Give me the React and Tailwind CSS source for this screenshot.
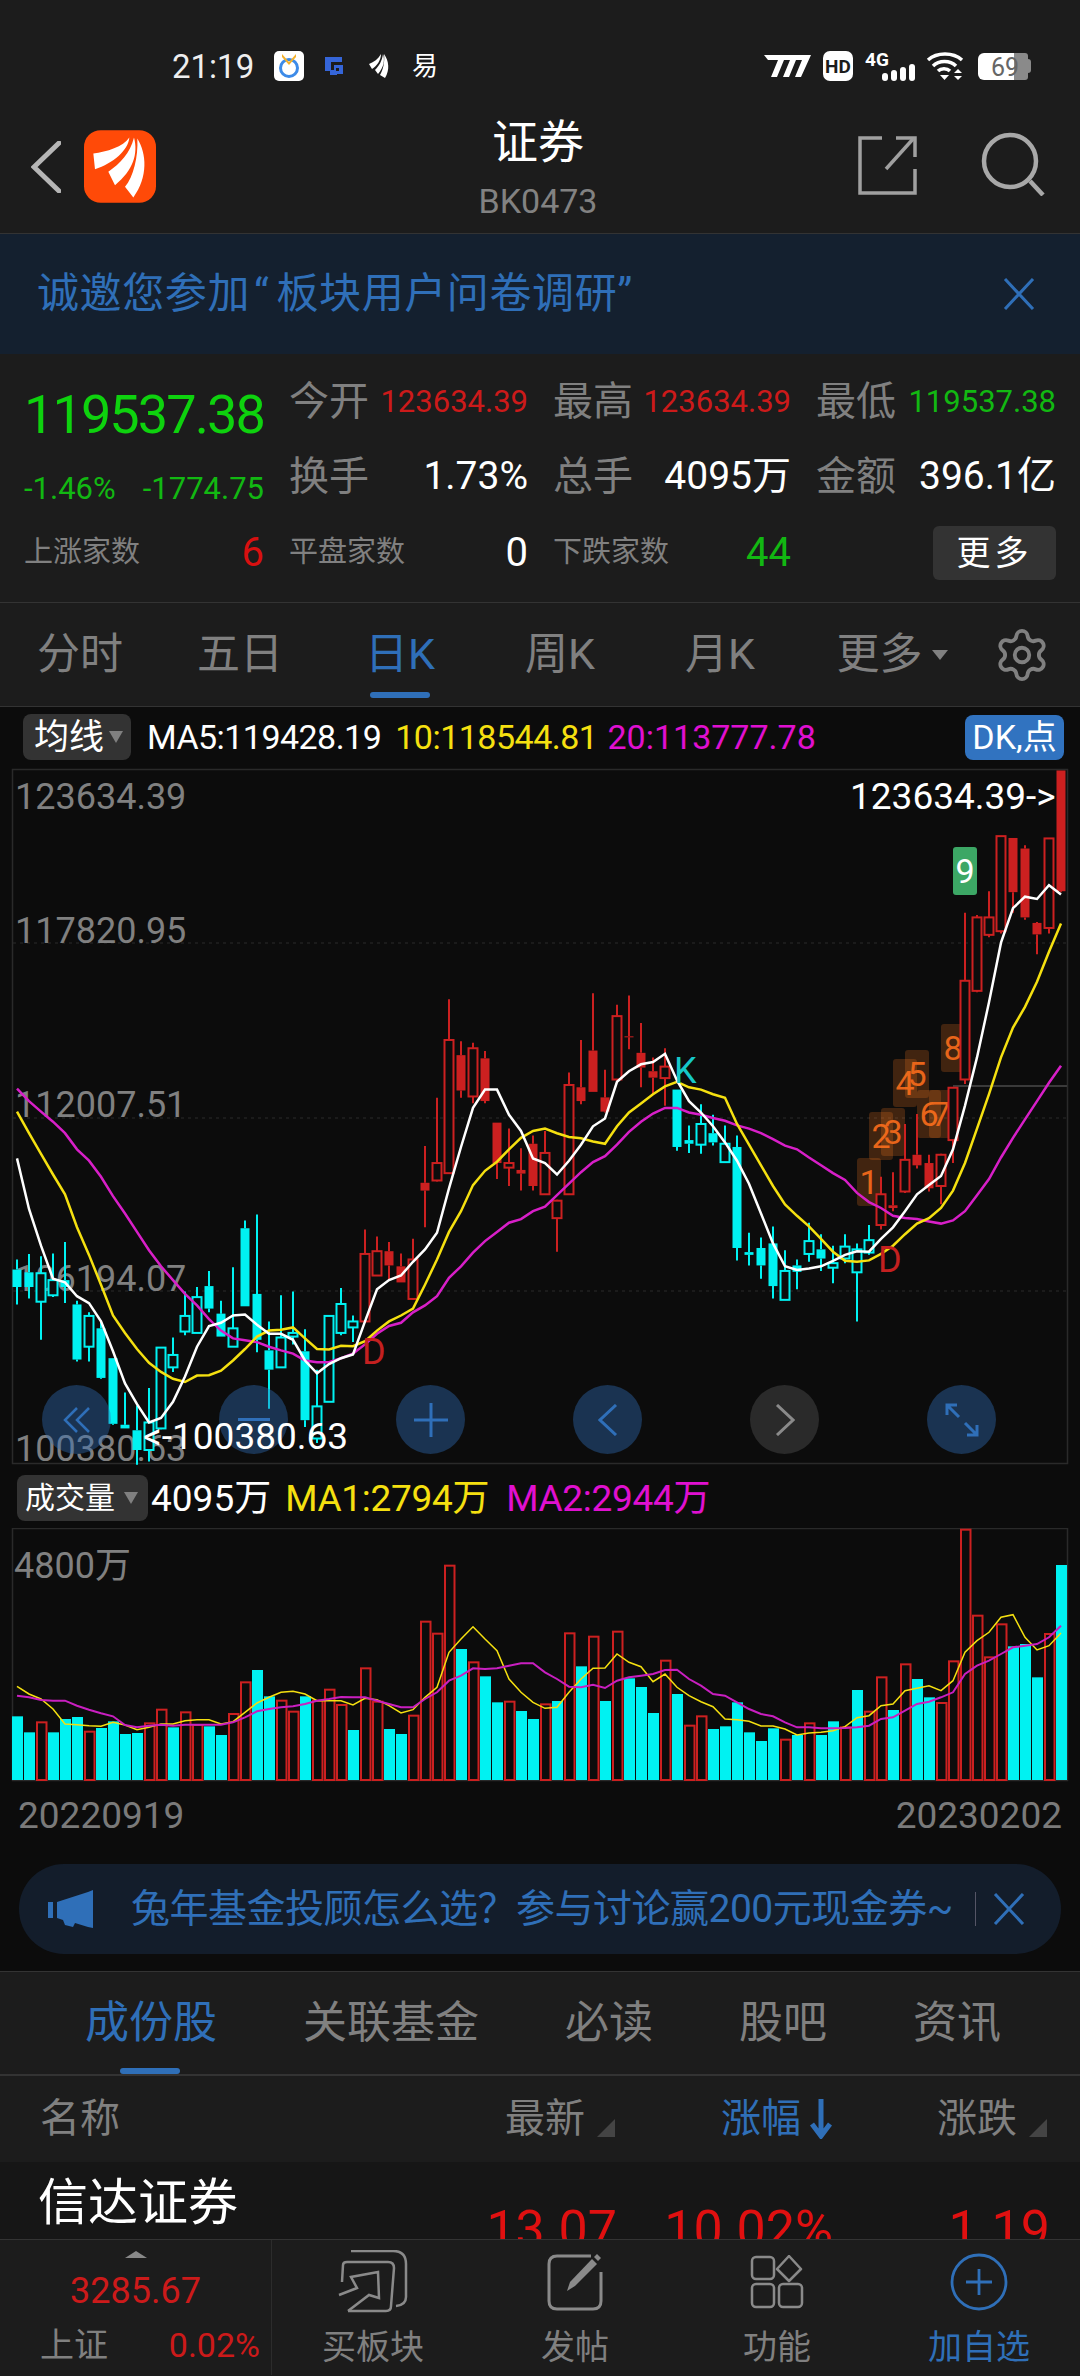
import React from "react";
import { Settings } from "lucide-react";

const BLUE = "#2f6fb8";
const RED = "#cc2020";
const CYAN = "#00f2f2";

// candles read off the chart: wick top, wick bottom, body top, body bottom, solid
const candles = [
  [1090,1188,1112,1150,1],[1078,1175,1118,1150,1],[1083,1265,1120,1182,0],[1077,1172,1135,1168,0],[1052,1185,1135,1150,1],
  [1180,1312,1188,1308,1],[1205,1312,1213,1280,0],[1225,1350,1240,1348,1],[1305,1450,1305,1448,1],[1380,1458,1450,1458,1],
  [1408,1537,1462,1505,1],[1370,1530,1445,1505,0],[1282,1460,1282,1458,0],[1260,1335,1298,1325,0],[1160,1255,1213,1247,0],
  [1150,1250,1172,1250,0],[1115,1205,1148,1197,1],[1180,1258,1208,1258,1],[1107,1280,1240,1280,0],[1005,1192,1022,1192,1],
  [992,1292,1165,1265,1],[1225,1415,1288,1330,1],[1168,1325,1260,1325,0],[1160,1275,1250,1258,0],[1242,1455,1290,1440,1],
  [1330,1490,1410,1480,0],[1213,1400,1213,1400,0],[1152,1255,1187,1250,0],[1212,1270,1225,1238,0],
  [1025,1225,1078,1225,0],[1040,1125,1072,1125,0],[1052,1135,1072,1103,1],[1077,1140,1105,1140,1],[1045,1178,1090,1176,0],
  [843,1020,923,940,1],[738,920,880,918,0],[523,902,612,902,0],[615,738,645,722,1],[618,750,630,735,0],[636,750,652,745,1],
  [792,915,792,880,1],[805,930,880,890,0],[848,940,895,903,1],[820,940,838,930,1],[810,948,858,948,0],[960,1073,962,1000,0],
  [683,948,710,948,0],[612,752,715,745,1],[510,725,635,725,1],[677,770,737,768,1],[535,700,560,698,0],[515,632,604,606,1],
  [575,715,640,672,1],[650,730,680,694,1],[630,755,670,695,0],
  [720,853,720,845,1],[798,858,830,838,1],[752,860,795,840,0],[775,842,815,835,1],[798,880,838,878,0],[820,1092,845,1065,1],
  [1032,1103,1074,1080,1],[1042,1132,1065,1103,1],[1018,1175,1055,1148,1],[1070,1178,1115,1178,0],[1090,1155,1103,1117,1],
  [1010,1095,1050,1078,0],[1035,1115,1068,1088,1],[1060,1142,1098,1108,0],[1035,1098,1062,1088,0],[1055,1225,1068,1118,0],
  [1015,1080,1048,1075,0],
  [910,1025,948,1015,0],[900,985,972,978,1],[795,945,873,942,0],[773,892,862,885,1],[862,942,880,935,1],[860,970,862,930,0],
  [715,880,716,830,0],[335,708,483,698,0],[340,508,345,505,0],[288,388,345,383,0],[168,380,168,375,0],[172,335,172,290,1],
  [188,350,195,345,1],[355,425,357,382,1],[172,380,173,368,0],[25,290,25,288,1],
];

const isCyan = (i) => (i >= 0 && i <= 28) || (i >= 55 && i <= 71);

const ma5 = [870,980,1060,1132,1140,1170,1185,1225,1290,1360,1405,1445,1435,1400,1345,1280,1235,1228,1212,1210,1232,1252,1252,1265,1310,1338,1318,1305,1297,1225,1155,1135,1125,1095,1068,1032,935,845,760,720,720,775,810,870,880,905,875,840,800,783,703,680,665,660,642,700,745,770,800,835,875,925,990,1055,1105,1113,1110,1105,1093,1080,1072,1073,1045,1020,985,948,928,908,850,755,650,530,400,325,300,305,275,295];
const ma10 = [768,815,860,905,948,1020,1080,1145,1212,1250,1285,1315,1335,1350,1357,1343,1342,1332,1310,1285,1258,1245,1243,1238,1262,1285,1286,1278,1279,1268,1245,1225,1212,1197,1145,1090,1030,985,928,897,877,850,825,810,805,815,823,826,833,838,800,770,750,730,713,703,715,720,730,738,795,840,885,930,970,995,1018,1045,1073,1093,1095,1092,1078,1060,1035,1012,1000,978,940,880,805,730,650,585,540,485,420,358];
const ma20 = [718,745,768,790,815,850,875,910,952,990,1030,1070,1105,1135,1165,1190,1220,1245,1262,1266,1270,1280,1288,1295,1310,1314,1314,1305,1295,1275,1252,1235,1228,1205,1190,1170,1130,1105,1075,1050,1030,1010,1002,985,975,950,925,900,878,865,840,812,790,772,760,760,770,775,782,788,798,805,815,828,842,850,868,885,902,917,945,965,978,995,1000,1002,1007,1012,1005,985,950,915,868,825,785,745,705,668];

// negative = red hollow bar
const vols = [712,760,-730,760,720,714,-758,747,727,765,762,-733,-692,745,-700,-738,742,768,-705,-610,573,652,-665,-698,652,-665,-632,-678,753,-568,-668,750,765,-710,-428,-464,-260,510,-550,592,670,-668,696,720,-676,666,-463,562,-473,666,-458,598,624,702,-545,645,-740,-712,750,742,670,760,786,748,-782,768,-733,768,727,-745,633,-698,-595,693,-556,600,655,-672,-547,-152,-410,-535,-436,502,495,595,-465,258];
const vma1 = [622,645,660,690,735,737,740,742,730,738,752,745,735,735,725,722,722,735,728,700,672,655,640,637,645,665,665,665,678,658,662,680,702,692,655,625,520,480,443,480,515,600,640,670,688,685,640,600,568,567,525,550,563,608,585,625,650,668,683,720,722,727,741,741,750,768,762,760,755,743,716,710,680,675,635,628,620,635,605,520,485,460,415,407,475,513,500,462];
const vma2 = [650,655,663,665,665,680,692,703,712,738,745,740,737,740,737,737,737,737,730,715,697,690,685,682,675,665,660,654,655,655,665,675,685,685,660,640,605,590,568,570,568,560,553,553,580,600,623,625,617,627,605,595,590,585,573,572,600,620,645,650,670,690,705,712,730,745,745,748,748,747,745,740,720,715,695,675,668,655,640,585,560,545,525,505,500,495,475,440];

const cx = (i) => 17 + 12 * i;
const cy = (v) => 760 + v / 2.178;
const vy = (v) => 1480 + v / 3;

const line = (data, toY) => data.map((v, i) => `${cx(i)},${toY(v).toFixed(1)}`).join(" ");

const tags = [
  ["1", 857, 1159],["2", 869, 1113],["3", 881, 1109],["4", 893, 1060],["5", 905, 1051],["6", 917, 1091],["7", 929, 1091],["8", 941, 1025],
];

function XIcon({ className }) {
  return (
    <svg viewBox="0 0 32 32" className={className} fill="none" stroke={BLUE} strokeWidth="3">
      <path d="M2 1 30 31M30 1 2 31" />
    </svg>
  );
}

function StatusBar() {
  return (
    <div className="h-[90px] pt-[51px] pl-[172px] pr-[49px] flex justify-between">
      <div className="flex items-center h-[30px]">
        <span className="text-[33px] leading-none text-[#eee] w-[102px]">21:19</span>
        <svg viewBox="0 0 30 30" className="w-[30px] h-[30px]">
          <rect width="30" height="30" rx="5" fill="#fff" />
          <circle cx="15" cy="17" r="8.5" fill="none" stroke="#3d8be8" strokeWidth="3" />
          <path d="M8 3 15 11 22 3 22 6 15 14 8 6Z" fill="#f5b12a" />
        </svg>
        <svg viewBox="0 0 20 20" className="w-[20px] h-[20px] ml-[20px]">
          <path d="M1 1H18V6H7V14H10V9H19V18H13V19H6V15H1Z" fill="#3565d8" />
          <path d="M12 12H15V15H12Z" fill="#1c1c1c" />
        </svg>
        <svg viewBox="0 0 22 26" className="w-[22px] h-[26px] ml-[24px]">
          <path d="M1 11C6 9 10 6 13 1 13 7 9 13 4 16ZM7 17C11 13 14 8 15 1 17 7 16 14 10 21ZM12 22C15 17 17 9 16 1 21 8 22 17 17 25Z" fill="#fff" />
        </svg>
        <span className="text-[26px] leading-none text-white ml-[22px]">易</span>
      </div>
      <div className="flex items-center h-[30px]">
        <svg viewBox="0 0 47 22" className="w-[47px] h-[22px]">
          <path d="M0 0H47L37 22H31L38 5H32L25 22H19L26 5H20L13 22H7L14 5H4Z" fill="#fff" />
        </svg>
        <div className="w-[30px] h-[30px] ml-[12px] bg-white rounded-[7px] flex items-center justify-center text-[19px] font-bold text-[#1c1c1c] leading-none">HD</div>
        <div className="relative w-[50px] h-[30px] ml-[12px]">
          <span className="absolute left-0 top-[-1px] text-[19px] font-bold text-white leading-none">4G</span>
          <div className="absolute right-0 bottom-0 flex items-end gap-[3px]">
            <div className="w-[6px] h-[8px] rounded-sm bg-white" />
            <div className="w-[6px] h-[11px] rounded-sm bg-white" />
            <div className="w-[6px] h-[14px] rounded-sm bg-white" />
            <div className="w-[6px] h-[17px] rounded-sm bg-white" />
          </div>
        </div>
        <svg viewBox="0 0 38 28" className="w-[38px] h-[28px] ml-[11px]" fill="none" stroke="#fff" strokeWidth="3.5">
          <path d="M2 8C11 0 27 0 36 8" />
          <path d="M7 14C13 8 24 8 30 14" />
          <path d="M12 19C15 16 21 16 24 19" />
          <path d="M14 23H23L18.5 28Z" fill="#fff" stroke="none" />
          <path d="M28 21 32 17 36 21ZM28 24H36L32 28Z" fill="#fff" stroke="none" />
        </svg>
        <div className="relative w-[53px] h-[27px] ml-[14px] flex">
          <div className="w-[36px] h-full bg-white rounded-l-[6px]" />
          <div className="w-[14px] h-full bg-[#8a8a8a] rounded-r-[3px]" />
          <div className="w-[3px] h-[14px] self-center bg-[#8a8a8a] rounded-r-sm" />
          <span className="absolute left-[13px] top-[2px] text-[25px] leading-none text-[#666]">69</span>
        </div>
      </div>
    </div>
  );
}

function Header() {
  return (
    <div className="h-[144px] border-b border-[#333] flex items-start relative">
      <div className="w-[360px] flex items-center pl-[31px] pt-[40px]">
        <svg viewBox="0 0 30 52" className="w-[30px] h-[52px]" fill="none" stroke="#b5b5b5" strokeWidth="5" strokeLinecap="round">
          <path d="M28 2 3 26 28 50" />
        </svg>
        <svg viewBox="42 30 216 218" className="w-[72px] h-[73px] ml-[23px]">
          <rect x="42" y="30" width="216" height="218" rx="50" fill="#ff4a08" />
          <path d="M70 100C110 95 160 80 178 52 175 90 130 130 75 147Z" fill="#fff" />
          <path d="M115 155C150 130 180 100 192 52 205 100 190 150 135 195Z" fill="#fff" />
          <path d="M165 200C190 170 205 110 202 55 230 100 235 170 190 232Z" fill="#fff" />
        </svg>
      </div>
      <div className="w-[356px] flex flex-col items-center pt-[25px]">
        <div className="text-[46px] leading-[54px] text-white">证券</div>
        <div className="text-[34px] leading-none mt-[15px] text-[#828282]">BK0473</div>
      </div>
      <div className="flex-1 flex items-start pl-[141px] pt-[45px]">
        <svg viewBox="0 0 60 60" className="w-[60px] h-[60px]" fill="none" stroke="#a0a0a0" strokeWidth="3.5">
          <path d="M25 3H3V58H58V34" />
          <path d="M29 34 56 4" />
          <path d="M39 3H58V22" />
        </svg>
        <svg viewBox="0 0 64 64" className="w-[64px] h-[64px] ml-[64px] -mt-[3px]" fill="none" stroke="#a8a8a8" strokeWidth="4.5">
          <circle cx="29" cy="29" r="26" />
          <path d="M49 49 62 63" />
        </svg>
      </div>
    </div>
  );
}

function NoticeBar() {
  return (
    <div className="h-[120px] bg-[#14202f] flex items-center justify-between pl-[37px] pr-[45px]">
      <span className="text-[42px] leading-none text-[#2f6fb8] tracking-[0.6px]">诚邀您参加<span className="pl-[4px] pr-[7px]">“</span>板块用户问卷调研”</span>
      <XIcon className="w-[32px] h-[32px]" />
    </div>
  );
}

function Stat({ label, value, color, big }) {
  return (
    <div className="flex items-center justify-between pr-[25px]">
      <span className="text-[40px] leading-none text-[#808080]">{label}</span>
      <span className={`leading-none ${color} ${big ? "text-[39px]" : "text-[31px]"}`}>{value}</span>
    </div>
  );
}

function Count({ label, value, color }) {
  return (
    <div className="flex items-center justify-between pr-[25px] pt-[5px]">
      <span className="text-[29px] leading-none text-[#808080]">{label}</span>
      <span className={`text-[40px] leading-none ${color}`}>{value}</span>
    </div>
  );
}

function Quote() {
  return (
    <div className="h-[249px] pl-[24px] pt-[10px] border-b border-[#333]">
      <div className="grid grid-cols-[265px_264px_263px_240px] grid-rows-[75px_75px_72px]">
        <div className="text-[54px] text-[#0ed20e] leading-none tracking-[-1.9px] pt-[24px]">119537.38</div>
        <Stat label="今开" value="123634.39" color="text-[#cc1a1a]" />
        <Stat label="最高" value="123634.39" color="text-[#cc1a1a]" />
        <div className="flex items-center justify-between">
          <span className="text-[40px] leading-none text-[#808080]">最低</span>
          <span className="text-[31px] leading-none text-[#12b812]">119537.38</span>
        </div>
        <div className="flex items-center justify-between pr-[25px] pt-[24px] text-[31px] text-[#12b812] leading-none">
          <span>-1.46%</span>
          <span>-1774.75</span>
        </div>
        <Stat label="换手" value="1.73%" color="text-white" big />
        <Stat label="总手" value="4095万" color="text-white" big />
        <div className="flex items-center justify-between">
          <span className="text-[40px] leading-none text-[#808080]">金额</span>
          <span className="text-[39px] leading-none text-white">396.1亿</span>
        </div>
        <Count label="上涨家数" value="6" color="text-[#d81010]" />
        <Count label="平盘家数" value="0" color="text-white" />
        <Count label="下跌家数" value="44" color="text-[#12b812]" />
        <div className="flex items-center justify-end pt-[5px]">
          <div className="w-[123px] h-[54px] bg-[#333] rounded-md flex items-center justify-center text-[34px] text-white tracking-[4px] leading-none">更多</div>
        </div>
      </div>
    </div>
  );
}

function PeriodTabs() {
  const tabs = ["分时", "五日", "日K", "周K", "月K"];
  return (
    <div className="h-[104px] border-b border-[#333] flex">
      {tabs.map((t) => (
        <div key={t} className="w-[160px] relative flex items-center justify-center">
          <span className={`text-[43px] leading-none ${t === "日K" ? "text-[#2f6fb8]" : "text-[#808080]"}`}>{t}</span>
          {t === "日K" && <div className="absolute left-[50px] bottom-[8px] w-[60px] h-[6px] rounded-sm bg-[#2f6fb8]" />}
        </div>
      ))}
      <div className="w-[160px] flex items-center justify-center pl-[24px]">
        <span className="text-[43px] leading-none text-[#808080]">更多</span>
        <div className="ml-[9px] w-0 h-0 border-x-[8px] border-x-transparent border-t-[10px] border-t-[#808080]" />
      </div>
      <div className="flex-1 flex items-center pl-[33px]">
        <Settings size={58} strokeWidth={1.6} color="#808080" />
      </div>
    </div>
  );
}

function Candles() {
  return candles.map((c, i) => {
    const [hi, lo, top, bot, solid] = c;
    const color = isCyan(i) ? CYAN : RED;
    const x = cx(i);
    const y1 = cy(top);
    const h = Math.max(cy(bot) - y1, 1);
    return (
      <g key={i}>
        <path d={`M${x} ${cy(hi)}V${y1}M${x} ${y1 + h}V${cy(lo)}`} stroke={color} strokeWidth="2" />
        {solid ? (
          <rect x={x - 4.5} y={y1} width="9" height={h} fill={color} />
        ) : (
          <rect x={x - 4.5} y={y1} width="9" height={h} fill="#0c0c0c" stroke={color} strokeWidth="2" />
        )}
      </g>
    );
  });
}

function ChartButton({ dark, children }) {
  return (
    <div className={`w-[69px] h-[69px] rounded-full flex items-center justify-center ${dark ? "bg-[#2e2e2e]/90" : "bg-[#2f6fb8]/40"}`}>
      {children}
    </div>
  );
}

function PriceChart() {
  const label = "fill-[#808080] text-[36px]";
  return (
    <div className="relative h-[698px]">
      <svg viewBox="0 768 1080 698" className="block w-[1080px] h-[698px]">
        <rect x="12.5" y="770.5" width="1055" height="694" fill="none" stroke="#2a2a2a" strokeWidth="1.5" />
        {[944, 1119, 1292].map((y) => (
          <path key={y} d={`M13 ${y}H1067`} stroke="#2a2a2a" strokeDasharray="3 4" />
        ))}
        <path d="M953 1087H1067" stroke="#3a3a3a" strokeWidth="2" />
        <text x="15" y="810" className={label}>123634.39</text>
        <text x="15" y="944" className={label}>117820.95</text>
        <text x="15" y="1118" className={label}>112007.51</text>
        <text x="15" y="1292" className={label}>106194.07</text>
        <text x="15" y="1462" className={label}>100380.63</text>
        {tags.map(([n, x, y]) => (
          <g key={n}>
            <rect x={x} y={y} width="24" height="48" rx="3" fill="#ff7a1f" fillOpacity="0.22" />
            <text x={x + 12} y={y + 36} textAnchor="middle" className="fill-[#e8651a] text-[34px]">{n}</text>
          </g>
        ))}
        <Candles />
        <polyline points={line(ma20, cy)} fill="none" stroke="#d81fc8" strokeWidth="2.5" />
        <polyline points={line(ma10, cy)} fill="none" stroke="#f5e010" strokeWidth="2.5" />
        <polyline points={line(ma5, cy)} fill="none" stroke="#fff" strokeWidth="2.5" />
        <text x="362" y="1365" className="fill-[#c42020] text-[36px]">D</text>
        <text x="878" y="1273" className="fill-[#c42020] text-[36px]">D</text>
        <text x="674" y="1084" className="fill-[#16c8c8] text-[36px]">K</text>
        <rect x="953" y="848" width="24" height="48" rx="3" fill="#3ca765" />
        <text x="965" y="884" textAnchor="middle" className="fill-white text-[34px]">9</text>
      </svg>
      <div className="absolute left-[42px] top-[618px] flex gap-[108px]">
        <ChartButton>
          <svg viewBox="0 0 28 28" className="w-[28px] h-[28px]" fill="none" stroke={BLUE} strokeWidth="2.5"><path d="M14 2 2 14 14 26M26 2 14 14 26 26" /></svg>
        </ChartButton>
        <ChartButton>
          <div className="w-[32px] h-[3px] bg-[#2f6fb8]" />
        </ChartButton>
        <ChartButton>
          <svg viewBox="0 0 34 34" className="w-[34px] h-[34px]" fill="none" stroke={BLUE} strokeWidth="3"><path d="M17 0V34M0 17H34" /></svg>
        </ChartButton>
        <ChartButton>
          <svg viewBox="0 0 20 32" className="w-[20px] h-[32px]" fill="none" stroke={BLUE} strokeWidth="3"><path d="M18 1 2 16 18 31" /></svg>
        </ChartButton>
        <ChartButton dark>
          <svg viewBox="0 0 20 32" className="w-[20px] h-[32px]" fill="none" stroke="#8a8a8a" strokeWidth="3"><path d="M2 1 18 16 2 31" /></svg>
        </ChartButton>
        <ChartButton>
          <svg viewBox="0 0 34 34" className="w-[34px] h-[34px]" fill="none" stroke={BLUE} strokeWidth="3">
            <path d="M14 14 2 2M2 12V2H12M20 20 32 32M32 22V32H22" />
          </svg>
        </ChartButton>
      </div>
      <span className="absolute left-[850px] top-[8px] text-[37px] leading-[44px] text-white">123634.39-&gt;</span>
      <span className="absolute left-[143px] top-[648px] text-[37px] leading-[44px] text-white">&lt;-100380.63</span>
    </div>
  );
}

function VolumeChart() {
  return (
    <svg viewBox="0 1529 1080 254" className="block w-[1080px] h-[254px]">
      <rect x="12.5" y="1529.5" width="1055" height="252" fill="none" stroke="#2a2a2a" strokeWidth="1.5" />
      {vols.map((v, i) => {
        const top = vy(Math.abs(v));
        const x = cx(i) + 0.5;
        return v > 0 ? (
          <rect key={i} x={x - 5.5} y={top} width="11" height={1781 - top} fill={CYAN} />
        ) : (
          <rect key={i} x={x - 4.5} y={top} width="9.5" height={1781 - top} fill="none" stroke={RED} strokeWidth="2" />
        );
      })}
      <polyline points={line(vma1, vy)} fill="none" stroke="#f5e010" strokeWidth="1.5" />
      <polyline points={line(vma2, vy)} fill="none" stroke="#c91fc0" strokeWidth="2" />
    </svg>
  );
}

function PillNotice() {
  return (
    <div className="px-[19px] pt-[15px] pb-[17px]">
      <div className="h-[90px] rounded-full bg-[#131d2b] flex items-center pl-[29px]">
        <svg viewBox="0 0 45 38" className="w-[45px] h-[38px]">
          <path d="M0 12H5V28H0ZM9 12 40 2 45 0V38L40 37 27 33 25 37 17 35 15 30 9 28Z" fill={BLUE} />
        </svg>
        <span className="ml-[38px] w-[844px] text-[39px] leading-none text-[#2f6fb8] whitespace-nowrap tracking-[-0.5px]">兔年基金投顾怎么选？参与讨论赢200元现金券~</span>
        <div className="w-px h-[34px] bg-[#556]" />
        <XIcon className="w-[32px] h-[32px] ml-[17px]" />
      </div>
    </div>
  );
}

function DetailTabs() {
  return (
    <div className="h-[104px] border-y border-[#333] flex items-center gap-[86px] pl-[85px]">
      <div className="relative">
        <span className="text-[44px] leading-none text-[#2f6fb8]">成份股</span>
        <div className="absolute left-[35px] top-[67px] w-[60px] h-[6px] rounded-sm bg-[#2f6fb8]" />
      </div>
      {["关联基金", "必读", "股吧", "资讯"].map((t) => (
        <span key={t} className="text-[44px] leading-none text-[#808080]">{t}</span>
      ))}
    </div>
  );
}

function SortMark() {
  return <div className="w-0 h-0 self-end ml-[12px] mb-[2px] border-l-[18px] border-l-transparent border-b-[18px] border-b-[#444]" />;
}

function TableHead() {
  return (
    <div className="h-[87px] border-t border-[#333] grid grid-cols-[505px_216px_216px_1fr] items-center text-[40px] leading-none text-[#808080]">
      <span className="pl-[40px]">名称</span>
      <div className="flex items-center h-[40px]"><span>最新</span><SortMark /></div>
      <div className="flex items-center text-[#2f6fb8]">
        <span>涨幅</span>
        <svg viewBox="0 0 22 40" className="w-[22px] h-[40px] ml-[9px]" fill="none" stroke={BLUE} strokeWidth="5"><path d="M11 0V36M2 25 11 37 20 25" /></svg>
      </div>
      <div className="flex items-center h-[40px]"><span>涨跌</span><SortMark /></div>
    </div>
  );
}

function TableRow() {
  return (
    <div className="h-[77px] bg-[#161616] overflow-hidden grid grid-cols-[484px_133px_216px_217px]">
      <span className="pl-[38px] pt-[16px] text-[50px] leading-none text-white">信达证券</span>
      {["13.07", "10.02%", "1.19"].map((v) => (
        <span key={v} className="text-right pt-[42px] text-[52px] leading-none text-[#e01010]">{v}</span>
      ))}
    </div>
  );
}

function NavItem({ label, active, children }) {
  return (
    <div className="flex-1 flex flex-col items-center pt-[10px]">
      <div className="h-[64px] flex items-center">{children}</div>
      <span className={`mt-[16px] text-[34px] leading-none ${active ? "text-[#2f6fb8]" : "text-[#808080]"}`}>{label}</span>
    </div>
  );
}

function BottomBar() {
  return (
    <div className="h-[136px] border-t border-[#333] flex">
      <div className="w-[272px] border-r border-[#2c2c2c] flex flex-col items-center pt-[11px]">
        <div className="w-0 h-0 border-x-[11px] border-x-transparent border-b-[7px] border-b-[#888]" />
        <span className="mt-[15px] text-[36px] leading-none text-[#cc1a1a]">3285.67</span>
        <div className="w-full flex justify-between items-center pl-[40px] pr-[11px] mt-[19px] leading-none">
          <span className="text-[34px] text-[#808080]">上证</span>
          <span className="text-[34px] text-[#cc1a1a]">0.02%</span>
        </div>
      </div>
      <NavItem label="买板块">
        <svg viewBox="0 0 70 64" className="w-[70px] h-[64px]" fill="none" stroke="#8a8a8a" strokeWidth="2.5">
          <path d="M13 1H55Q68 1 68 14V47Q68 55 58 56" />
          <path d="M4 32 5 15Q5 12 9 12H50Q56 12 56 18L53 56Q53 61 48 61H10" />
          <path d="M1 45 19 38 13 27 40 22 41 48 31 45 10 61" />
        </svg>
      </NavItem>
      <NavItem label="发帖">
        <svg viewBox="0 0 56 58" className="w-[56px] h-[58px]" fill="none" stroke="#8a8a8a" strokeWidth="3">
          <path d="M44 3H10Q2 3 2 11V48Q2 56 10 56H46Q54 56 54 48V19" />
          <path d="M20 38 23 29 45 6 50 11 28 33Z" fill="#8a8a8a" stroke="none" />
          <path d="M47 4 50 1 54 5 51 8Z" fill="#8a8a8a" stroke="none" />
        </svg>
      </NavItem>
      <NavItem label="功能">
        <svg viewBox="0 0 54 54" className="w-[54px] h-[54px]" fill="none" stroke="#8a8a8a" strokeWidth="2.5">
          <rect x="2" y="2" width="22" height="22" rx="4" />
          <path d="M39 1 51 14 39 26 27 14Z" strokeLinejoin="round" />
          <rect x="2" y="29" width="22" height="23" rx="4" />
          <rect x="29" y="29" width="23" height="23" rx="4" />
        </svg>
      </NavItem>
      <NavItem label="加自选" active>
        <svg viewBox="0 0 58 58" className="w-[58px] h-[58px]" fill="none" stroke={BLUE} strokeWidth="2.8">
          <circle cx="29" cy="29" r="27" />
          <path d="M29 16V42M16 29H42" />
        </svg>
      </NavItem>
    </div>
  );
}

export default function App() {
  return (
    <div className="w-[1080px] h-[2376px] overflow-hidden bg-[#1c1c1c] text-white font-[Roboto,'Noto_Sans_CJK_SC',sans-serif]">
      <StatusBar />
      <Header />
      <NoticeBar />
      <Quote />
      <PeriodTabs />

      <div className="bg-[#0c0c0c]">
        {/* 均线 */}
        <div className="h-[60px] flex items-center pl-[23px] pr-[16px]">
          <div className="w-[108px] h-[46px] bg-[#333] rounded-lg flex items-center pl-[11px]">
            <span className="text-[35px] leading-none text-white">均线</span>
            <div className="ml-[5px] w-0 h-0 border-x-[7px] border-x-transparent border-t-[12px] border-t-[#808080]" />
          </div>
          <span className="ml-[16px] text-[34px] leading-none text-white tracking-[-0.55px]">MA5:119428.19</span>
          <span className="ml-[14px] text-[34px] leading-none text-[#f5e010] tracking-[-0.5px]">10:118544.81</span>
          <span className="ml-[10px] text-[34px] leading-none text-[#e010d0]">20:113777.78</span>
          <div className="ml-auto w-[99px] h-[45px] bg-[#3173c0] rounded-lg flex items-center justify-center text-[34px] leading-none text-white">DK,点</div>
        </div>
        <PriceChart />

        {/* 成交量 */}
        <div className="h-[63px] flex items-start pl-[17px]">
          <div className="w-[131px] h-[46px] mt-[10px] bg-[#333] rounded-lg flex items-center pl-[8px]">
            <span className="text-[30px] leading-none text-white">成交量</span>
            <div className="ml-[9px] w-0 h-0 border-x-[7px] border-x-transparent border-t-[12px] border-t-[#808080]" />
          </div>
          <div className="h-[46px] mt-[10px] flex items-center text-[37px] leading-none">
            <span className="ml-[3px] text-white">4095万</span>
            <span className="ml-[14px] text-[#f5e010] tracking-[-0.3px]">MA1:2794万</span>
            <span className="ml-[17px] text-[#e010d0] tracking-[-0.3px]">MA2:2944万</span>
          </div>
        </div>
        <div className="relative">
          <VolumeChart />
          <span className="absolute left-[14px] top-[20px] text-[36px] leading-none text-[#808080]">4800万</span>
        </div>
        <div className="h-[67px] flex justify-between items-center pl-[18px] pr-[18px] text-[37px] leading-none text-[#7a7a7a]">
          <span>20220919</span>
          <span>20230202</span>
        </div>
        <PillNotice />
      </div>

      <DetailTabs />
      <TableHead />
      <TableRow />
      <BottomBar />
    </div>
  );
}
